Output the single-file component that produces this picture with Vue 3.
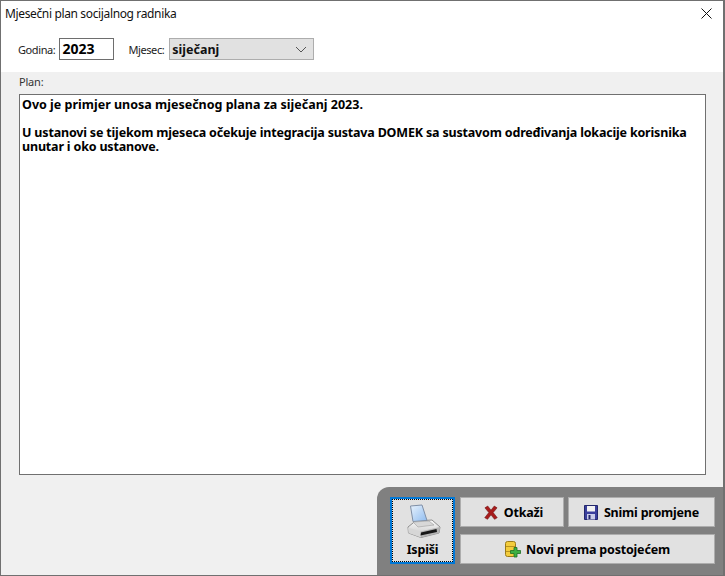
<template>
  <div class="window">
    <header class="top">
      <div class="titlebar">
        <span class="title">Mjesečni plan socijalnog radnika</span>
        <svg class="close" width="11" height="11" viewBox="0 0 11 11"><path d="M0.5 0.5L10.5 10.5M10.5 0.5L0.5 10.5" stroke="#111" stroke-width="1" fill="none"/></svg>
      </div>
      <div class="filters">
        <label class="lbl">Godina:</label>
        <div class="year">2023</div>
        <label class="lbl month-lbl">Mjesec:</label>
        <div class="month">
          <span>siječanj</span>
          <svg width="12" height="7" viewBox="0 0 12 7"><path d="M1 1L6 6L11 1" stroke="#555" stroke-width="1" fill="none"/></svg>
        </div>
      </div>
    </header>
    <main class="content">
      <div class="plan-lbl">Plan:</div>
      <div class="plan">
        <p>Ovo je primjer unosa mjesečnog plana za siječanj 2023.</p>
        <p class="gap">U ustanovi se tijekom mjeseca očekuje integracija sustava DOMEK sa sustavom određivanja lokacije korisnika unutar i oko ustanove.</p>
      </div>
      <div class="footer">
        <div class="panel">
          <button class="btn print">
            <span class="focus">
              <svg class="printer" width="36" height="36" viewBox="0 0 36 36">
                <defs>
                  <linearGradient id="paper" x1="0" y1="0" x2="1" y2="1"><stop offset="0" stop-color="#e8f2fc"/><stop offset="1" stop-color="#8fbcf0"/></linearGradient>
                  <linearGradient id="body" x1="0" y1="0" x2="0" y2="1"><stop offset="0" stop-color="#fafafa"/><stop offset="1" stop-color="#c4c4c4"/></linearGradient>
                </defs>
                <path d="M3 24L10.5 18L27 17L35 24L34 30L16 34.5L3.5 30Z" fill="url(#body)" stroke="#8f8f8f" stroke-width="1"/>
                <path d="M5.5 3L17 2L22 17.5L8 18.5Z" fill="url(#paper)" stroke="#7f8fa6" stroke-width="1"/>
                <path d="M8 19L24 18L29 22L13 24Z" fill="#d8d8d8" stroke="#9e9e9e" stroke-width="0.6"/>
                <path d="M3 24.5L15.5 28.5L16 34.5L3.5 30Z" fill="#d6d6d6"/>
                <path d="M15.5 28.5L35 24L34 30L16 34.5Z" fill="#b4b4b4"/>
                <path d="M16 29.5L31.5 26L32 29L15.5 32.5Z" fill="#161616"/>
              </svg>
              <span class="print-text">Ispiši</span>
            </span>
          </button>
          <div class="actions">
            <div class="row">
              <button class="btn cancel">
                <svg width="14" height="15" viewBox="0 0 15 15"><path d="M1 2.5L4 0.6L7.5 5L11 0.6L14 2.5L9.8 7.6L14.2 13L11.3 14.8L7.5 10L3.8 14.8L0.8 13L5.2 7.6Z" fill="#a81c1c" stroke="#6e1010" stroke-width="0.6"/></svg>
                Otkaži
              </button>
              <button class="btn save">
                <svg width="14" height="15" viewBox="0 0 14 15"><path d="M0.5 0.5H13.5V14.5H0.5Z" fill="#3a3f9c" stroke="#23266b"/><rect x="3" y="1" width="8" height="5.5" fill="#f2f2f2"/><rect x="3" y="9" width="8" height="5.5" fill="#c9cce8"/><rect x="4.5" y="10" width="2" height="4" fill="#23266b"/></svg>
                Snimi promjene
              </button>
            </div>
            <button class="btn new">
              <svg width="17" height="17" viewBox="0 0 17 17">
                <rect x="0.5" y="0.5" width="10" height="15" rx="2" fill="#f3cc3c" stroke="#9a7a18"/>
                <path d="M1 5.5H10M1 10.5H10" stroke="#b8921e" stroke-width="1"/>
                <path d="M9 6.5H12V9.5H15.5V12.5H12V16H9V12.5H5.5V9.5H9Z" fill="#3cb043" stroke="#1d6e22" stroke-width="0.8"/>
              </svg>
              Novi prema postojećem
            </button>
          </div>
        </div>
      </div>
    </main>
  </div>
</template>

<script setup>
</script>

<style>
html, body { margin: 0; background: #f0f0f0; }
</style>

<style scoped>
.window {
  width: 725px;
  height: 576px;
  box-sizing: border-box;
  border: 1px solid #707070;
  border-right-width: 2px;
  display: flex;
  flex-direction: column;
  background: #f0f0f0;
  font-family: "Noto Sans", sans-serif;
  overflow: hidden;
}
.top {
  height: 71px;
  background: #fff;
  flex: none;
}
.titlebar {
  height: 25px;
  display: flex;
  align-items: center;
  justify-content: space-between;
  padding: 0 11px 0 4px;
}
.title { font-size: 12px; letter-spacing: -0.36px; color: #111; }
.filters {
  display: flex;
  align-items: center;
  padding: 12px 0 0 17px;
}
.lbl { font-size: 11px; letter-spacing: -0.4px; color: #222; margin-right: 4px; }
.month-lbl { margin-left: 14px; margin-right: 5px; }
.year {
  height: 20px;
  width: 51px;
  border: 1px solid #6e6e6e;
  font: bold 14px "Noto Sans", sans-serif;
  line-height: 20px;
  padding-left: 2px;
}
.month {
  height: 22px;
  width: 145px;
  box-sizing: border-box;
  background: #e1e1e1;
  border: 1px solid #adadad;
  display: flex;
  align-items: center;
  justify-content: space-between;
  padding: 0 6px 0 2px;
  font: bold 12.5px "Noto Sans", sans-serif;
  color: #111;
}
.content {
  flex: 1;
  display: flex;
  flex-direction: column;
  min-height: 0;
}
.plan-lbl {
  font-size: 11px;
  letter-spacing: -0.2px;
  color: #333;
  height: 22px;
  line-height: 20px;
  padding-left: 18px;
}
.plan {
  width: 687px;
  height: 381px;
  margin-left: 18px;
  box-sizing: border-box;
  background: #fff;
  border: 1px solid #707070;
  padding: 3px 1px 2px 2px;
  font: bold 12.5px/14px "Noto Sans", sans-serif;
  color: #000;
  flex: none;
}
.plan p { margin: 0; }
.plan .gap { margin-top: 14px; letter-spacing: -0.18px; }
.footer {
  flex: 1;
  display: flex;
  justify-content: flex-end;
  align-items: flex-end;
  padding-top: 12px;
  min-height: 0;
}
.panel {
  width: 346px;
  height: 88px;
  box-sizing: border-box;
  background: #808080;
  border-top-left-radius: 12px;
  padding: 10px 8px 10px 13px;
  display: flex;
  gap: 5px;
}
.btn {
  margin: 0;
  background: #e1e1e1;
  border: 1px solid #adadad;
  font: bold 12.5px "Noto Sans", sans-serif;
  letter-spacing: -0.2px;
  color: #000;
  display: flex;
  align-items: center;
  justify-content: center;
  gap: 6px;
  padding: 0;
}
.print {
  width: 65px;
  height: 67px;
  border: 2px solid #0078d7;
}
.focus {
  width: 61px;
  height: 63px;
  box-sizing: border-box;
  border: 1px dotted #000;
  display: flex;
  flex-direction: column;
  align-items: center;
  justify-content: flex-start;
  padding-top: 3px;
}
.print-text { margin-top: 2px; }
.actions {
  width: 256px;
  display: flex;
  flex-direction: column;
  gap: 7px;
}
.row { display: flex; gap: 4px; }
.cancel { width: 104px; height: 30px; padding-left: 3px; }
.save { flex: 1; height: 30px; }
.new { height: 30px; gap: 4px; }
</style>
